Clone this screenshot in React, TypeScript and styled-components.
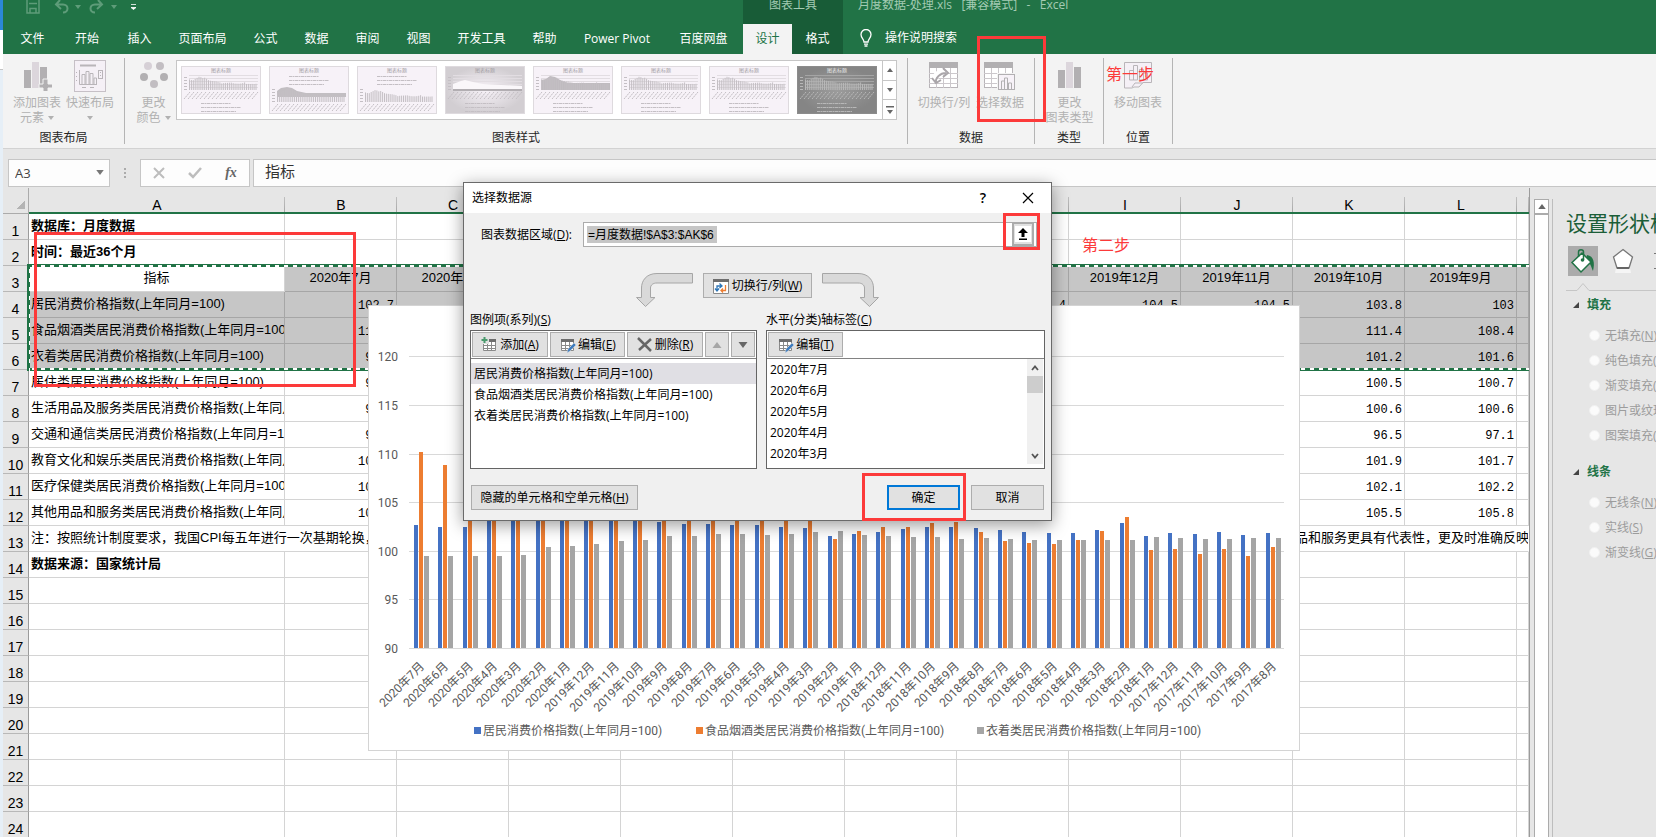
import React from "react";
import styled, { createGlobalStyle, css } from "styled-components";

const GlobalStyle = createGlobalStyle`
  *, *::before, *::after { box-sizing: border-box; }
  html, body, #root { height: 100%; }
  body {
    margin: 0;
    overflow: hidden;
    font-family: "Open Sans", "Noto Sans CJK SC", sans-serif;
    font-size: 12px;
    line-height: 16px;
    color: #262626;
    background: #e6e6e6;
  }
  button, input, select { font: inherit; color: inherit; margin: 0; }
  u { text-underline-offset: 1px; }
`;

const GREEN = "#217346";
const RED = "#fc3a3a";

/* ---------- shell ---------- */

const Screen = styled.div`
  position: relative;
  display: flex;
  height: 100vh;
  overflow: hidden;
`;

const DesktopEdge = styled.div`
  flex: none;
  width: 3px;
  background: linear-gradient(#2b88d8 0 30px, #fff 30px 69px, #c4c4c4 69px 70px, #e6eff7 70px);
`;

const Window = styled.div`
  flex: 1;
  min-width: 0;
  display: flex;
  flex-direction: column;
  background: #e6e6e6;
`;

/* ---------- title bar and tabs ---------- */

const TitleBar = styled.header`
  display: flex;
  height: 24px;
  background: ${GREEN};
  color: #a3cbb3;
`;

const QuickAccess = styled.div`
  width: 740px;
  flex: none;
  display: flex;
  align-items: flex-start;
  padding-left: 16px;
`;

const QuickButton = styled.button<{ $w: number }>`
  width: ${(p) => p.$w}px;
  flex: none;
  height: 16px;
  padding: 0;
  border: 0;
  background: none;
  color: #5e9c79;
  display: flex;
  justify-content: center;
  align-items: flex-start;
`;

const QuickCaret = styled(QuickButton)`
  padding-top: 5px;
`;

const ContextTitle = styled.div`
  width: 100px;
  flex: none;
  text-align: center;
  line-height: 10px;
  background: #185c37;
`;

const DocTitle = styled.div`
  padding-left: 15px;
  line-height: 10px;
  white-space: pre;
`;

const TabBar = styled.nav`
  display: flex;
  height: 30px;
  padding-left: 2px;
  background: ${GREEN};
`;

const Tab = styled.button<{ $kind?: "active" | "context"; $w?: number }>`
  border: 0;
  padding: 0;
  height: 30px;
  line-height: 28px;
  text-align: center;
  white-space: nowrap;
  flex: none;
  width: ${(p) => p.$w}px;
  color: ${(p) => (p.$kind === "active" ? GREEN : "#fff")};
  background: ${(p) => (p.$kind === "active" ? "#f3f3f3" : p.$kind === "context" ? "#185c37" : "transparent")};
`;

const TellMe = styled.button`
  display: flex;
  align-items: center;
  gap: 13px;
  padding: 0 0 2px 17px;
  border: 0;
  background: none;
  color: #fff;
`;

/* ---------- ribbon ---------- */

const Ribbon = styled.div`
  display: flex;
  height: 95px;
  padding: 4px 0;
  background: #f3f3f3;
  border-bottom: 1px solid #d2d2d2;
`;

const Group = styled.section<{ $w: number }>`
  flex: none;
  width: ${(p) => p.$w}px;
  display: flex;
  flex-direction: column;
  border-right: 1px solid #b4b4b4;
`;

const GroupBody = styled.div<{ $pad?: string }>`
  flex: 1;
  display: flex;
  padding: ${(p) => p.$pad || "0"};
`;

const GroupName = styled.div`
  height: 16px;
  text-align: center;
  line-height: 16px;
  margin-bottom: -2px;
  color: #262626;
`;

const BigButton = styled.button<{ $w: number }>`
  flex: none;
  width: ${(p) => p.$w}px;
  padding: 3px 0 0;
  border: 0;
  background: none;
  color: #b1b1b1;
  display: flex;
  flex-direction: column;
  align-items: center;
  line-height: 15px;
  white-space: nowrap;
  > svg { display: block; height: 30px; margin-bottom: 4px; }
`;

const ButtonLine = styled.span`
  display: flex;
  align-items: center;
  height: 15px;
  gap: 4px;
`;

const Gallery = styled.div`
  display: flex;
  margin-top: 2px;
  height: 60px;
  width: 721px;
  background: #fff;
  border: 1px solid #c6c6c6;
`;

const Thumbs = styled.div`
  flex: 1;
  display: flex;
  gap: 8px;
  padding: 5px 4px;
`;

const ThumbButton = styled.button`
  padding: 0;
  border: 0;
  background: none;
  width: 80px;
  height: 48px;
  svg { display: block; }
`;

const GallerySteps = styled.div`
  width: 14px;
  display: flex;
  flex-direction: column;
  border-left: 1px solid #c6c6c6;
`;

const Step = styled.button`
  flex: 1;
  padding: 0;
  border: 0;
  background: #fff;
  display: flex;
  align-items: center;
  justify-content: center;
  & + & { border-top: 1px solid #c6c6c6; }
`;

/* ---------- formula bar ---------- */

const FormulaBar = styled.div`
  display: flex;
  height: 39px;
  padding: 10px 0 1px 5px;
`;

const NameBox = styled.div`
  position: relative;
  width: 102px;
  select {
    appearance: none;
    width: 100%;
    height: 28px;
    padding: 0 6px;
    border: 1px solid #c6c6c6;
    border-radius: 0;
    background: #fdfdfd;
    font-size: 13px;
    color: #444;
  }
  svg { position: absolute; right: 6px; top: 11px; pointer-events: none; }
`;

const Grip = styled.div`
  width: 30px;
  display: flex;
  flex-direction: column;
  align-items: center;
  justify-content: center;
  gap: 2px;
  i { width: 2px; height: 2px; background: #ababab; }
`;

const FormulaTools = styled.div`
  display: flex;
  width: 110px;
  height: 28px;
  margin-right: 3px;
  background: #fdfdfd;
  border: 1px solid #c6c6c6;
  button {
    flex: 1;
    padding: 0;
    border: 0;
    background: none;
    font: italic 700 14px "Liberation Serif", serif;
    color: #666;
  }
  svg { display: block; margin: auto; }
`;

const FormulaInput = styled.input`
  flex: 1;
  min-width: 0;
  height: 28px;
  padding: 0 11px 5px;
  border: 1px solid #c6c6c6;
  border-right: 0;
  background: #fdfdfd;
  font-size: 15px;
  color: #333;
  outline: 0;
`;

/* ---------- worksheet ---------- */

const Workspace = styled.main`
  flex: 1;
  min-height: 0;
  display: flex;
`;

const SheetArea = styled.div`
  position: relative;
  flex: 1;
  min-width: 0;
  overflow: hidden;
  border-right: 1px solid #9b9b9b;
`;

const Sheet = styled.table`
  width: 100%;
  table-layout: fixed;
  border-collapse: separate;
  border-spacing: 0;
  font-family: "Liberation Sans", "Noto Sans CJK SC", sans-serif;
  font-size: 13px;
  line-height: 16px;
  color: #000;
  background: #fff;
`;

const HeadCell = styled.th`
  height: 26px;
  padding: 10px 0 0;
  font-weight: 400;
  font-size: 14px;
  line-height: 14px;
  border-bottom: 2px solid ${GREEN};
  background: linear-gradient(#c0c0c0, #a8a8a8) right 9px / 1px 15px no-repeat #e6e6e6;
`;

const Corner = styled.td`
  height: 26px;
  padding: 0;
  border-bottom: 1px solid #ababab;
  border-right: 1px solid #ababab;
  background: linear-gradient(135deg, #e6e6e6 50%, #b4b4b4 50%) 13px 12px / 9px 9px no-repeat #e6e6e6;
`;

const RowHead = styled.th`
  height: 26px;
  padding: 9px 0 0;
  font-weight: 400;
  font-size: 14px;
  line-height: 16px;
  text-align: center;
  background: #e6e6e6;
  border-right: 1px solid #9b9b9b;
  border-bottom: 1px solid #b8b8b8;
`;

const Cell = styled.td<{ $sel?: boolean; $align?: string; $bold?: boolean; $num?: boolean; $open?: boolean }>`
  height: 26px;
  padding: 0 2px 1px;
  overflow: hidden;
  white-space: nowrap;
  text-align: ${(p) => p.$align || "left"};
  font-weight: ${(p) => (p.$bold ? 700 : 400)};
  background: ${(p) => (p.$sel ? "#c6c6c6" : "#fff")};
  border-bottom: 1px solid ${(p) => (p.$sel ? "#a6a6a6" : "#d4d4d4")};
  border-right: 1px solid ${(p) => (p.$open ? "transparent" : p.$sel ? "#a6a6a6" : "#d4d4d4")};
  ${(p) =>
    p.$num &&
    css`
      padding-top: 4px;
      font-family: "Liberation Mono", monospace;
      font-size: 12px;
    `}
`;

const Marquee = styled.div`
  position: absolute;
  left: 24px;
  right: 0;
  top: 76px;
  height: 107px;
  pointer-events: none;
  background:
    repeating-linear-gradient(90deg, transparent 0 5px, #fff 5px 9px) 0 1px / 100% 2px no-repeat,
    repeating-linear-gradient(90deg, transparent 0 5px, #fff 5px 9px) 0 104px / 100% 2px no-repeat,
    repeating-linear-gradient(transparent 0 5px, #fff 5px 9px) 2px 0 / 1px 100% no-repeat,
    linear-gradient(${GREEN}, ${GREEN}) 0 0 / 100% 3px no-repeat,
    linear-gradient(${GREEN}, ${GREEN}) 0 104px / 100% 3px no-repeat,
    linear-gradient(${GREEN}, ${GREEN}) 0 0 / 3px 100% no-repeat;
`;

const ChartFrame = styled.figure`
  position: absolute;
  left: 365px;
  top: 117px;
  margin: 0;
  background: #fff;
  border: 1px solid #d4d4d4;
  svg { display: block; }
  text { font-family: Roboto, "Noto Sans CJK SC", sans-serif; font-size: 12px; fill: #595959; }
`;

const ScrollBar = styled.div`
  width: 15px;
  margin: 11px 3px 0 4px;
  display: flex;
  flex-direction: column;
  button {
    height: 15px;
    padding: 0;
    border: 1px solid #ababab;
    background: #fff;
    display: flex;
    align-items: center;
    justify-content: center;
  }
  div { flex: 1; border: 1px solid #ababab; border-bottom: 0; background: #fff; }
`;

/* ---------- task pane ---------- */

const Pane = styled.aside`
  flex: none;
  width: 104px;
  margin-top: 11px;
  overflow: hidden;
  border-left: 1px solid #bdbdbd;
  padding-left: 13px;
  white-space: nowrap;
`;

const PaneTitle = styled.h2`
  margin: 10px 0 0;
  font-size: 21px;
  line-height: 28px;
  font-weight: 400;
  color: #1b5e38;
`;

const PaneTabs = styled.div`
  display: flex;
  margin-top: 9px;
  width: 130px;
  gap: 10px;
  padding-left: 2px;
`;

const PaneTab = styled.button<{ $on?: boolean }>`
  width: 30px;
  height: 30px;
  padding: 0;
  border: 0;
  background: ${(p) => (p.$on ? "#ababab" : "transparent")};
  svg { display: block; margin: auto; }
`;

const PaneSection = styled.fieldset`
  border: 0;
  margin: 0 0 12px;
  padding: 0;
  min-width: 0;
`;

const PaneHeading = styled.legend`
  display: flex;
  align-items: center;
  gap: 8px;
  padding: 0 0 0 7px;
  margin-bottom: 6px;
  font-weight: 700;
  line-height: 24px;
  color: ${GREEN};
`;

const Option = styled.label`
  display: flex;
  align-items: center;
  gap: 5px;
  height: 25px;
  padding-left: 23px;
  color: #9c9c9c;
  input {
    appearance: none;
    width: 11px;
    height: 11px;
    border-radius: 50%;
    background: #fbfbfb;
    border: 1px solid #f0f0f0;
    flex: none;
  }
`;

/* ---------- dialog ---------- */

const Dialog = styled.div`
  position: absolute;
  left: 463px;
  top: 182px;
  width: 589px;
  height: 339px;
  background: #f0f0f0;
  border: 1px solid #6a6a6a;
  box-shadow: 0 4px 16px rgba(0, 0, 0, 0.4);
  color: #000;
`;

const DialogTitle = styled.div`
  display: flex;
  align-items: center;
  height: 30px;
  padding: 0 15px 0 8px;
  background: #fff;
  span { flex: 1; }
  button { border: 0; padding: 0; background: none; width: 16px; height: 20px; font-size: 14px; font-weight: 600; }
  button + button { margin-left: 29px; }
  svg { display: block; margin: auto; }
`;

const RangeRow = styled.div`
  display: flex;
  align-items: center;
  margin-top: 9px;
  padding-left: 17px;
  label { width: 102px; }
`;

const RangeField = styled.div`
  display: flex;
  width: 454px;
  height: 25px;
  background: #fff;
  border: 1px solid #ababab;
  input {
    flex: 1;
    min-width: 0;
    border: 0;
    outline: 0;
    padding: 0 4px;
    font-family: "Liberation Sans", "Noto Sans CJK SC", sans-serif;
    background: linear-gradient(#c6c6c6, #c6c6c6) 3px 3px / 130px 17px no-repeat;
  }
  button {
    width: 22px;
    margin-right: 2px;
    padding: 0;
    border: 2px solid #ababab;
    border-top-width: 1px;
    background: #e1e1e1;
  }
  svg { display: block; margin: auto; }
`;

const SwitchRow = styled.div`
  display: flex;
  gap: 10px;
  height: 34px;
  margin-top: 26px;
  padding-left: 172px;
`;

const PushButton = styled.button<{ $w: number; $primary?: boolean }>`
  width: ${(p) => p.$w}px;
  height: 25px;
  padding: 0;
  display: flex;
  align-items: center;
  justify-content: center;
  gap: 2px;
  white-space: nowrap;
  background: #e1e1e1;
  border: ${(p) => (p.$primary ? "2px solid #0078d7" : "1px solid #adadad")};
`;

const Columns = styled.div`
  display: flex;
  gap: 9px;
  margin-top: 4px;
  padding-left: 6px;
`;

const Column = styled.div<{ $w: number }>`
  width: ${(p) => p.$w}px;
`;

const ColumnLabel = styled.div`
  line-height: 18px;
  margin-bottom: 1px;
`;

const ListPanel = styled.div`
  height: 139px;
  border: 1px solid #646464;
  background: #fff;
  display: flex;
  flex-direction: column;
`;

const ListTools = styled.div`
  display: flex;
  gap: 2px;
  height: 28px;
  flex: none;
  padding: 1px;
  border-bottom: 1px solid #828282;
`;

const ListBody = styled.div`
  flex: 1;
  display: flex;
  min-height: 0;
`;

const Items = styled.ul<{ $top?: number }>`
  flex: 1;
  list-style: none;
  margin: 0;
  padding: ${(p) => p.$top || 0}px 0 0;
`;

const Item = styled.li<{ $on?: boolean }>`
  height: 21px;
  line-height: 21px;
  padding-left: 3px;
  background: ${(p) => (p.$on ? "#e0dfe4" : "transparent")};
`;

const ListScroll = styled.div`
  width: 16px;
  margin: 0 1px 4px 0;
  background: #f0f0f0;
  display: flex;
  flex-direction: column;
  align-items: center;
  button { width: 16px; height: 17px; border: 0; padding: 0; background: none; }
  div { width: 16px; height: 17px; background: #cdcdcd; margin-bottom: auto; }
  svg { display: block; margin: auto; }
`;

const DialogFooter = styled.div`
  display: flex;
  gap: 11px;
  margin-top: 16px;
  padding: 0 7px;
  button:first-child { margin-right: auto; }
`;

/* ---------- red notes drawn over the window ---------- */

const NoteBox = styled.div<{ $x: number; $y: number; $w: number; $h: number }>`
  position: absolute;
  left: ${(p) => p.$x}px;
  top: ${(p) => p.$y}px;
  width: ${(p) => p.$w}px;
  height: ${(p) => p.$h}px;
  border: 3px solid ${RED};
  pointer-events: none;
`;

const NoteText = styled.div<{ $x: number; $y: number }>`
  position: absolute;
  left: ${(p) => p.$x}px;
  top: ${(p) => p.$y}px;
  font-size: 16px;
  line-height: 20px;
  color: ${RED};
`;

/* ---------- drawings ---------- */

const Caret = ({ color = "#b1b1b1", up = false, w = 6 }: { color?: string; up?: boolean; w?: number }) => (
  <svg width={w} height={w / 2 + 1} viewBox="0 0 6 4">
    <path d={up ? "M0 4h6L3 0z" : "M0 0h6L3 4z"} fill={color} />
  </svg>
);

const AddElementIcon = () => (
  <svg width="30" height="30">
    <path d="M2 9h7v18H2z" fill="#b2b0b2" />
    <path d="M10 1h7v26h-7z" fill="#dcd6dc" />
    <path d="M18 6h7v21h-7z" fill="#b2b0b2" />
    <path d="M21 18h5v5h5v4h-5v5h-5v-5h-4v-4h4z" fill="#b2b0b2" stroke="#f3f3f3" />
  </svg>
);

const LayoutIcon = () => (
  <svg width="32" height="30" viewBox="0 1 32 30" overflow="visible" fill="none" stroke="#b9b5b9">
    <rect x=".5" y=".5" width="31" height="31" fill="#f5f0f6" stroke="#c6c0c6" />
    <path d="M6 5.500h16" strokeWidth="2" />
    <path d="M5.500 10v14.500H23M8 24V14.500h3V24M12 24V11.500h3V24M16 24V13.500h3V24M20 24v-6h2.500v6M2.500 12v1M2.500 16v1M2.500 20v1M8 27.500h4M16 27.500h4" />
    <rect x="24.500" y="10.500" width="4" height="8" />
    <path d="M26.500 12v1M26.500 15v1" />
  </svg>
);

const ColorsIcon = () => (
  <svg width="28" height="30">
    {[
      [8, 5, "#d6d0d6"],
      [20, 5, "#c2bec2"],
      [4, 16, "#b2b0b2"],
      [24, 16, "#b2b0b2"],
      [14, 23, "#c2bec2"],
    ].map(([x, y, c]) => (
      <circle key={`${x}-${y}`} cx={x} cy={y} r="4" fill={String(c)} />
    ))}
  </svg>
);

const GridBase = () => (
  <>
    <rect x=".5" y="1.500" width="28" height="25" fill="#fff" stroke="#b8b4b8" />
    <path d="M0 1h29v6H0z" fill="#b2b0b2" />
    <path d="M0 12.500h29M0 17.500h29M0 22.500h29M7.500 7v20M14.500 7v20M21.500 7v20" stroke="#ccc8cc" />
  </>
);

const SwitchIcon = () => (
  <svg width="30" height="30">
    <GridBase />
    <path d="M6 19c0-5 4-8 12-8" fill="none" stroke="#fff" strokeWidth="6" />
    <path d="M7 22c-1-5 4-10 10-10M3 17l4 5 5-3M14 7l5 5-5 4" fill="none" stroke="#aaa6aa" strokeWidth="2" />
  </svg>
);

const SelectDataIcon = () => (
  <svg width="32" height="30">
    <GridBase />
    <rect x="13" y="12" width="19" height="18" fill="#f3f3f3" />
    <rect x="14.500" y="13.500" width="16" height="15" fill="#f7f2f8" stroke="#b2b0b2" />
    <path d="M17.500 28v-8h3v8M20.500 28V17h3v11M24.500 28v-6h3v6" fill="none" stroke="#b2b0b2" />
  </svg>
);

const ChartTypeIcon = () => (
  <svg width="24" height="30">
    <path d="M0 9h7v18H0z" fill="#b2b0b2" />
    <path d="M8 1h7v26H8z" fill="#dcd6dc" />
    <path d="M16 6h7v21h-7z" fill="#b2b0b2" />
  </svg>
);

const MoveChartIcon = () => (
  <svg width="29" height="30" fill="#f5f0f6" stroke="#b9b5b9">
    <path d="M.5 1.500h27v20H19l-4 4.500h-5l-2 1H.5z" />
    <path d="M5.500 19V9.500h4V19zM9.500 19V4.500h4V19zM15.500 19V8.500h4V19zM19.500 19v-7h4v7z" />
    <path d="M8 26l3-4h8" fill="none" />
  </svg>
);

const BLUE = [2.7, 2.5, 2.4, 3.3, 4.3, 5.2, 5.4, 4.5, 4.5, 3.8, 3.0, 2.8, 2.8, 2.7, 2.7, 2.5, 2.3, 1.5, 1.7, 1.9, 2.2, 2.5, 2.5, 2.3, 2.1, 1.9, 1.8, 1.8, 2.1, 2.9, 1.5, 1.8, 1.7, 1.9, 1.6, 1.8];
const ORANGE = [10.2, 8.8, 8.5, 11.3, 13.6, 16.0, 15.2, 12.9, 13.9, 11.4, 8.4, 7.3, 6.7, 6.1, 5.8, 4.7, 3.5, 1.2, 2.0, 2.4, 2.5, 2.9, 3.0, 1.9, 1.0, 0.8, 0.7, 1.1, 2.0, 3.5, 0.1, 0.2, -0.3, 0.2, -0.5, 0.4];
const GREY = [-0.5, -0.5, -0.5, -0.5, -0.4, 0.4, 0.5, 0.7, 1.0, 1.1, 1.5, 1.5, 1.7, 1.7, 1.6, 1.7, 1.9, 2.0, 1.6, 1.5, 1.4, 1.4, 1.2, 1.3, 1.2, 1.1, 1.1, 1.1, 1.1, 1.1, 1.4, 1.3, 1.2, 1.2, 1.3, 1.3];

const MONTHS = BLUE.map((_, i) => {
  const index = 2020 * 12 + 6 - i;
  return `${Math.floor(index / 12)}年${(index % 12) + 1}月`;
});

const LEGEND: [string, string, number][] = [
  ["居民消费价格指数(上年同月=100)", "#4472c4", 105],
  ["食品烟酒类居民消费价格指数(上年同月=100)", "#ed7d31", 327],
  ["衣着类居民消费价格指数(上年同月=100)", "#a5a5a5", 608],
];

const PriceChart = () => {
  const left = 40;
  const step = 24.33;
  const unit = 9.72;
  const base = 342;
  const top = (v: number) => base - (v + 10) * unit;
  return (
    <ChartFrame>
      <svg width="930" height="444">
        {[120, 115, 110, 105, 100, 95, 90].map((v) => {
          const y = Math.round(top(v - 100)) + 0.5;
          return (
            <g key={v}>
              <path d={`M${left} ${y}H915`} stroke="#d9d9d9" />
              <text x="29" y={y + 4} textAnchor="end">{v}</text>
            </g>
          );
        })}
        {MONTHS.map((m, i) => {
          const x = Math.round(left + i * step);
          return (
            <g key={m}>
              {[[BLUE[i], "#4472c4", 5, 4], [ORANGE[i], "#ed7d31", 10, 4], [GREY[i], "#a5a5a5", 15, 5]].map(([v, c, dx, w]) => (
                <rect
                  key={String(c)}
                  x={x + Number(dx)}
                  width={w}
                  y={Math.round(top(Number(v)))}
                  height={base - Math.round(top(Number(v)))}
                  fill={String(c)}
                />
              ))}
              <text textAnchor="end" transform={`translate(${x + 16} 361) rotate(-45)`}>{m}</text>
            </g>
          );
        })}
        {LEGEND.map(([name, color, x]) => (
          <g key={name}>
            <rect x={x} y="421" width="7" height="7" fill={color} />
            <text x={x + 9} y="429">{name}</text>
          </g>
        ))}
      </svg>
    </ChartFrame>
  );
};

/* A small preview of the chart in one of the gallery styles. */
const StyleThumb = ({ kind, id }: { kind: "bars" | "topLegend" | "compact" | "glow" | "area" | "dark"; id: number }) => {
  const dark = kind === "dark";
  const ink = dark ? "#b8b8b8" : "#c4bfc4";
  const legendTop = kind === "topLegend" || kind === "compact";
  const base = legendTop ? 36 : 24;
  const scale = kind === "compact" ? 0.9 : 1;
  const x0 = 8;
  const heights = ORANGE.map((v) => 6 + Math.max(0, v) * 0.45);
  return (
    <svg width="80" height="48">
      <defs>
        <radialGradient id={`bg${id}`}>
          <stop offset="0" stopColor={dark ? "#9c9c9c" : "#f7f2f8"} />
          <stop offset="1" stopColor={dark ? "#858585" : kind === "glow" ? "#d2ced2" : "#f7f2f8"} />
        </radialGradient>
      </defs>
      <rect x=".5" y=".5" width="79" height="47" fill={`url(#bg${id})`} stroke={dark ? "#8c8c8c" : "#dedade"} />
      <text x="40" y="6" fontSize="5" textAnchor="middle" fill={dark ? "#e8e8e8" : "#a39ea3"}>图表标题</text>
      {!legendTop && [9, 12, 15, 18, 21].map((y) => <path key={y} d={`M8 ${y}.5h69`} stroke={dark ? "#a5a5a5" : "#e2dde2"} />)}
      {[0, 3, 6, 9, 12].map((d) => <path key={d} d={`M3 ${base - d - 0.5}h3`} stroke={ink} />)}
      {kind === "topLegend" && <path d="M8 25l4-3 6-1 5 1 5 3 9 2h40v4H8z" fill="#c2bec2" />}
      {kind === "area" && <path d="M8 24V14l5-1 4-3 5 1 5 3 8 3h42v7z" fill="#bfbbbf" />}
      {kind === "glow" && <path d="M8 18l8-3 4-1 8 2 10 2 39 2v4H8z" fill="#faf7fa" />}
      {kind === "glow" && <path d="M8 24h69" stroke="#b2aeb2" strokeWidth="2" />}
      {kind !== "glow" &&
        heights.map((h, i) => (
          <path key={i} d={`M${x0 + i * 1.9 + 0.5} ${base}v${-h * scale}`} stroke={ink} strokeWidth="1" />
        ))}
      {Array.from({ length: 18 }, (_, i) => (
        <path key={i} d={`M${3 + i * 4} ${base + 9}l6-7`} stroke={ink} strokeDasharray="2 .6" />
      ))}
      {[0, 4, 8].map((d, i) => (
        <path key={d} d={`M20 ${(legendTop ? 10 : 37) + d}.5h${[30, 40, 35][i]}`} stroke={ink} strokeDasharray="3 .5 2 .5" />
      ))}
    </svg>
  );
};

const TableIcon = ({ mark }: { mark: "add" | "edit" | "swap" }) => (
  <svg width="17" height="16">
    <path d="M2.500 3.500h12v10h-12zM2 8.500h13M2 11.500h13M6.500 4v10M10.500 4v10" fill="#fff" stroke="#8a8a8a" />
    <path d="M2 2h13v3H2z" fill="#6d6d6d" />
    {mark === "add" && <path d="M0 0h8v7H0z" fill="#e1e1e1" />}
    {mark === "add" && <path d="M3.500 0v6M.5 3h6" stroke="#4a9a6e" strokeWidth="2" />}
    {mark === "edit" && <path d="M8 16l1-4 6-6 2 2-6 6z" fill="#3f7dbf" stroke="#e1e1e1" strokeWidth=".5" />}
    {mark === "swap" && <path d="M.5 2.500h15v13H.5z" fill="#fff" stroke="#8a8a8a" />}
    {mark === "swap" && <path d="M0 1h16v3H0z" fill="#6d6d6d" />}
    {mark === "swap" && <path d="M4 13V8h4M6.500 5.500L9 8 6.500 10M2 10.500l2 2.500 2-2.500" fill="none" stroke="#2e75b6" strokeWidth="1.300" />}
    {mark === "swap" && <path d="M12.500 7v5.500H8.500M10 10.500l-2 2 2 2" fill="none" stroke="#ed7d31" strokeWidth="1.300" />}
  </svg>
);

const BendArrow = ({ flip }: { flip?: boolean }) => (
  <svg width="57" height="34">
    <path
      transform={flip ? "matrix(-1 0 0 1 57 0)" : undefined}
      d="M56.500.5H21C10 .5 5.500 8 5.500 15v9.500H.5L9.500 33.500l9.500-9H14.500V15c0-3 2.500-5 6.500-5h35.500z"
      fill="#d9d9d9"
      stroke="#a6a6a6"
    />
  </svg>
);

/* ---------- content ---------- */

const TABS: [string, number][] = [
  ["文件", 55], ["开始", 54], ["插入", 51], ["页面布局", 75], ["公式", 51], ["数据", 51], ["审阅", 51],
  ["视图", 51], ["开发工具", 75], ["帮助", 51], ["Power Pivot", 94], ["百度网盘", 79],
];

const COLS = ["A", "B", "C", "D", "E", "F", "G", "H", "I", "J", "K", "L", ""];

const DATA: Record<number, [string, string[]]> = {
  4: ["居民消费价格指数(上年同月=100)", ["102.7", "102.5", "102.4", "103.3", "104.3", "105.2", "105.4", "104.5", "104.5", "103.8", "103"]],
  5: ["食品烟酒类居民消费价格指数(上年同月=100)", ["110.2", "", "", "", "", "", "", "", "", "111.4", "108.4"]],
  6: ["衣着类居民消费价格指数(上年同月=100)", ["99.5", "", "", "", "", "", "", "", "", "101.2", "101.6"]],
  7: ["居住类居民消费价格指数(上年同月=100)", ["99.3", "", "", "", "", "", "", "", "", "100.5", "100.7"]],
  8: ["生活用品及服务类居民消费价格指数(上年同月=100)", ["99.9", "", "", "", "", "", "", "", "", "100.6", "100.6"]],
  9: ["交通和通信类居民消费价格指数(上年同月=100)", ["95.6", "", "", "", "", "", "", "", "", "96.5", "97.1"]],
  10: ["教育文化和娱乐类居民消费价格指数(上年同月=100)", ["100.3", "", "", "", "", "", "", "", "", "101.9", "101.7"]],
  11: ["医疗保健类居民消费价格指数(上年同月=100)", ["101.6", "", "", "", "", "", "", "", "", "102.1", "102.2"]],
  12: ["其他用品和服务类居民消费价格指数(上年同月=100)", ["105.1", "", "", "", "", "", "", "", "", "105.5", "105.8"]],
};

const TITLES: Record<number, string> = {
  1: "数据库：月度数据",
  2: "时间：最近36个月",
  14: "数据来源：国家统计局",
};

const SheetRow = ({ n }: { n: number }) => {
  const data = DATA[n];
  const sel = n >= 3 && n <= 6;
  if (n === 13) {
    return (
      <tr>
        <RowHead scope="row">13</RowHead>
        <Cell colSpan={10} $open>注：按照统计制度要求，我国CPI每五年进行一次基期轮换，</Cell>
        <Cell colSpan={3} $open>品和服务更具有代表性，更及时准确反映居</Cell>
      </tr>
    );
  }
  return (
    <tr>
      <RowHead scope="row">{n}</RowHead>
      {n === 3 ? (
        <Cell $align="center">指标</Cell>
      ) : (
        <Cell $sel={sel} $bold={n in TITLES}>{data ? data[0] : TITLES[n]}</Cell>
      )}
      {COLS.slice(1).map((c, i) =>
        n === 3 ? (
          <Cell key={i} $sel $align="center">{c ? MONTHS[i] : ""}</Cell>
        ) : (
          <Cell key={i} $sel={sel} $num={!!data} $align="right">{data ? data[1][i] : ""}</Cell>
        )
      )}
    </tr>
  );
};

const OptionGroup = ({ title, name, options }: { title: string; name: string; options: [string, string][] }) => (
  <PaneSection>
    <PaneHeading>
      <svg width="6" height="6"><path d="M6 0v6H0z" fill="#444" /></svg>
      {title}
    </PaneHeading>
    {options.map(([text, key]) => (
      <Option key={text}>
        <input type="radio" name={name} disabled />
        <span>{text}(<u>{key}</u>)</span>
      </Option>
    ))}
  </PaneSection>
);

export default function App() {
  return (
    <>
      <GlobalStyle />
      <Screen>
        <DesktopEdge />
        <Window>
          <TitleBar>
            <QuickAccess>
              <QuickButton $w={28} aria-label="保存">
                <svg width="14" height="15" fill="none" stroke="currentColor" strokeWidth="1.500">
                  <path d="M1 -2v15h12V-2M3 3.500h8M4 13V8.500h6V13" />
                </svg>
              </QuickButton>
              <QuickButton $w={28} aria-label="撤销">
                <svg width="15" height="14" fill="none" stroke="currentColor" strokeWidth="2">
                  <path d="M6 0L2 4.500 7 9M2 4.500h7c6 0 6 8 0 8" />
                </svg>
              </QuickButton>
              <QuickCaret $w={6} aria-label="撤销列表"><Caret color="#5e9c79" /></QuickCaret>
              <QuickButton $w={30} aria-label="恢复">
                <svg width="15" height="14" fill="none" stroke="currentColor" strokeWidth="2">
                  <path d="M9 0l4 4.500L8 9M13 4.500H6c-6 0-6 8 0 8" />
                </svg>
              </QuickButton>
              <QuickCaret $w={6} aria-label="恢复列表"><Caret color="#5e9c79" /></QuickCaret>
              <QuickButton $w={32} aria-label="自定义快速访问工具栏">
                <svg width="7" height="12"><path d="M1 4.500h5M1 7.500h5l-2.500 2z" fill="#fff" stroke="#fff" strokeWidth=".8" /></svg>
              </QuickButton>
            </QuickAccess>
            <ContextTitle>图表工具</ContextTitle>
            <DocTitle>{"月度数据-处理.xls   [兼容模式]   -   Excel"}</DocTitle>
          </TitleBar>
          <TabBar>
            {TABS.map(([t, w]) => <Tab key={t} $w={w}>{t}</Tab>)}
            <Tab $kind="active" $w={49}>设计</Tab>
            <Tab $kind="context" $w={51}>格式</Tab>
            <TellMe>
              <svg width="12" height="18" fill="none" stroke="#fff" strokeWidth="1.300">
                <path d="M4 13c0-3-3-4-3-7.500a5 5 0 0 1 10 0C11 9 8 10 8 13zM4 15.200h4M4.500 17h3" />
              </svg>
              操作说明搜索
            </TellMe>
          </TabBar>

          <Ribbon>
            <Group $w={122}>
              <GroupBody $pad="0 0 0 8px">
                <BigButton $w={52}><AddElementIcon />添加图表<ButtonLine>元素<Caret /></ButtonLine></BigButton>
                <BigButton $w={54}><LayoutIcon />快速布局<ButtonLine><Caret /></ButtonLine></BigButton>
              </GroupBody>
              <GroupName>图表布局</GroupName>
            </Group>
            <Group $w={783}>
              <GroupBody $pad="0 0 0 6px">
                <BigButton $w={45}><ColorsIcon />更改<ButtonLine>颜色<Caret /></ButtonLine></BigButton>
                <Gallery>
                  <Thumbs>
                    {(["bars", "topLegend", "compact", "glow", "area", "bars", "bars", "dark"] as const).map((k, i) => (
                      <ThumbButton key={i} aria-label={`样式 ${i + 1}`}><StyleThumb kind={k} id={i} /></ThumbButton>
                    ))}
                  </Thumbs>
                  <GallerySteps>
                    <Step aria-label="向上"><Caret up color="#666" /></Step>
                    <Step aria-label="向下"><Caret color="#666" /></Step>
                    <Step aria-label="其他">
                      <svg width="8" height="8"><path d="M0 0h8v1.500H0zM1 4h6L4 8z" fill="#666" /></svg>
                    </Step>
                  </GallerySteps>
                </Gallery>
              </GroupBody>
              <GroupName>图表样式</GroupName>
            </Group>
            <Group $w={127}>
              <GroupBody $pad="0 0 0 6px">
                <BigButton $w={60}><SwitchIcon />切换行/列</BigButton>
                <BigButton $w={52}><SelectDataIcon />选择数据</BigButton>
              </GroupBody>
              <GroupName>数据</GroupName>
            </Group>
            <Group $w={69}>
              <GroupBody $pad="0 0 0 8px">
                <BigButton $w={53}><ChartTypeIcon />更改<ButtonLine>图表类型</ButtonLine></BigButton>
              </GroupBody>
              <GroupName>类型</GroupName>
            </Group>
            <Group $w={69}>
              <GroupBody $pad="0 0 0 7px">
                <BigButton $w={54}><MoveChartIcon />移动图表</BigButton>
              </GroupBody>
              <GroupName>位置</GroupName>
            </Group>
          </Ribbon>

          <FormulaBar>
            <NameBox>
              <select aria-label="名称框" defaultValue="A3"><option>A3</option></select>
              <Caret color="#777" w={8} />
            </NameBox>
            <Grip><i /><i /><i /></Grip>
            <FormulaTools>
              <button aria-label="取消输入"><svg width="12" height="12"><path d="M1 1l10 10M11 1L1 11" stroke="#bdbdbd" strokeWidth="2" /></svg></button>
              <button aria-label="输入"><svg width="14" height="12"><path d="M1 6l4 4L13 1" fill="none" stroke="#bdbdbd" strokeWidth="2.500" /></svg></button>
              <button>fx</button>
            </FormulaTools>
            <FormulaInput aria-label="编辑栏" defaultValue="指标" />
          </FormulaBar>

          <Workspace>
            <SheetArea>
              <Sheet>
                <colgroup>
                  <col style={{ width: 26 }} />
                  <col style={{ width: 256 }} />
                  {COLS.slice(2).map((c) => <col key={c} style={{ width: 112 }} />)}
                  <col />
                </colgroup>
                <thead>
                  <tr>
                    <Corner />
                    {COLS.map((c, i) => <HeadCell key={i} scope="col">{c}</HeadCell>)}
                  </tr>
                </thead>
                <tbody>
                  {Array.from({ length: 24 }, (_, i) => <SheetRow key={i} n={i + 1} />)}
                </tbody>
              </Sheet>
              <Marquee />
              <PriceChart />
            </SheetArea>
            <ScrollBar>
              <button aria-label="向上滚动"><Caret up color="#666" w={8} /></button>
              <div />
            </ScrollBar>
            <Pane>
              <PaneTitle>设置形状格式</PaneTitle>
              <PaneTabs>
                <PaneTab $on aria-label="填充与线条">
                  <svg width="26" height="26">
                    <path d="M17 7c7 1 8 8 6 16-2-4-2-8-7-11z" fill={GREEN} />
                    <path d="M12 5L2 14.500 11 24l10-10z" fill="#fff" stroke={GREEN} strokeWidth="1.500" />
                    <path d="M8.500 9V4c0-3 5-3 5 0v8" fill="none" stroke={GREEN} strokeWidth="1.500" />
                    <circle cx="12.500" cy="12" r="1.800" fill={GREEN} />
                  </svg>
                </PaneTab>
                <PaneTab aria-label="效果">
                  <svg width="22" height="26">
                    <path d="M4 20h14l1 5H3z" fill="#f5f5f5" />
                    <path d="M11 1.500l9.500 7.500L17 20H5L1.500 9z" fill="#fff" stroke="#777" strokeWidth="1.300" />
                    <path d="M5 20h12" stroke="#666" strokeWidth="2" />
                  </svg>
                </PaneTab>
                <PaneTab aria-label="大小与属性">
                  <svg width="24" height="26" fill="none" stroke="#777">
                    <path d="M5.500 6v14M3 5.500h5M3 20.500h5" />
                    <rect x="10.500" y="6.500" width="11" height="13" />
                  </svg>
                </PaneTab>
              </PaneTabs>
              <svg width="130" height="17" fill="none" stroke="#c6c6c6" style={{ display: "block" }}>
                <path d="M0 14.500h11l6-7 6 7h107" />
              </svg>
              <OptionGroup title="填充" name="fill" options={[["无填充", "N"], ["纯色填充", "S"], ["渐变填充", "G"], ["图片或纹理填充", "P"], ["图案填充", "A"]]} />
              <OptionGroup title="线条" name="line" options={[["无线条", "N"], ["实线", "S"], ["渐变线", "G"]]} />
            </Pane>
          </Workspace>
        </Window>

        <Dialog role="dialog" aria-label="选择数据源">
          <DialogTitle>
            <span>选择数据源</span>
            <button>?</button>
            <button aria-label="关闭"><svg width="12" height="12"><path d="M1 1l10 10M11 1L1 11" stroke="#000" strokeWidth="1.200" /></svg></button>
          </DialogTitle>
          <RangeRow>
            <label htmlFor="range">图表数据区域(<u>D</u>):</label>
            <RangeField>
              <input id="range" defaultValue="=月度数据!$A$3:$AK$6" />
              <button aria-label="折叠对话框">
                <svg width="16" height="16"><path d="M0 0h16v16H0z" fill="#fff" /><path d="M8 2l5 5H9.500v4h-3V7H3zM4 12.500h8V14H4z" /></svg>
              </button>
            </RangeField>
          </RangeRow>
          <SwitchRow>
            <BendArrow />
            <PushButton $w={109}><TableIcon mark="swap" /><span>切换行/列(<u>W</u>)</span></PushButton>
            <BendArrow flip />
          </SwitchRow>
          <Columns>
            <Column $w={287}>
              <ColumnLabel>图例项(系列)(<u>S</u>)</ColumnLabel>
              <ListPanel>
                <ListTools>
                  <PushButton $w={76}><TableIcon mark="add" /><span>添加(<u>A</u>)</span></PushButton>
                  <PushButton $w={75}><TableIcon mark="edit" /><span>编辑(<u>E</u>)</span></PushButton>
                  <PushButton $w={76}>
                    <svg width="16" height="15"><path d="M1 1l13 13M14 2L2 13" stroke="#666" strokeWidth="2.500" /></svg>
                    <span>删除(<u>R</u>)</span>
                  </PushButton>
                  <PushButton $w={24} aria-label="上移"><Caret up color="#a6a6a6" w={10} /></PushButton>
                  <PushButton $w={24} aria-label="下移"><Caret color="#666" w={10} /></PushButton>
                </ListTools>
                <ListBody>
                  <Items $top={4}>
                    {LEGEND.map(([name], i) => <Item key={name} $on={i === 0}>{name}</Item>)}
                  </Items>
                </ListBody>
              </ListPanel>
            </Column>
            <Column $w={279}>
              <ColumnLabel>水平(分类)轴标签(<u>C</u>)</ColumnLabel>
              <ListPanel>
                <ListTools>
                  <PushButton $w={75}><TableIcon mark="edit" /><span>编辑(<u>T</u>)</span></PushButton>
                </ListTools>
                <ListBody>
                  <Items>
                    {MONTHS.slice(0, 5).map((m) => <Item key={m}>{m}</Item>)}
                  </Items>
                  <ListScroll>
                    <button aria-label="向上滚动"><svg width="8" height="6"><path d="M1 5l3-3.500L7 5" fill="none" stroke="#555" strokeWidth="1.800" /></svg></button>
                    <div />
                    <button aria-label="向下滚动"><svg width="8" height="6"><path d="M1 1l3 3.500L7 1" fill="none" stroke="#555" strokeWidth="1.800" /></svg></button>
                  </ListScroll>
                </ListBody>
              </ListPanel>
            </Column>
          </Columns>
          <DialogFooter>
            <PushButton $w={167}><span>隐藏的单元格和空单元格(<u>H</u>)</span></PushButton>
            <PushButton $w={73} $primary>确定</PushButton>
            <PushButton $w={73}>取消</PushButton>
          </DialogFooter>
        </Dialog>

        <NoteBox $x={34} $y={232} $w={322} $h={155} />
        <NoteBox $x={977} $y={36} $w={69} $h={86} />
        <NoteBox $x={1003} $y={213} $w={37} $h={37} />
        <NoteBox $x={862} $y={473} $w={104} $h={48} />
        <NoteText $x={1106} $y={64}>第一步</NoteText>
        <NoteText $x={1082} $y={235}>第二步</NoteText>
      </Screen>
    </>
  );
}
